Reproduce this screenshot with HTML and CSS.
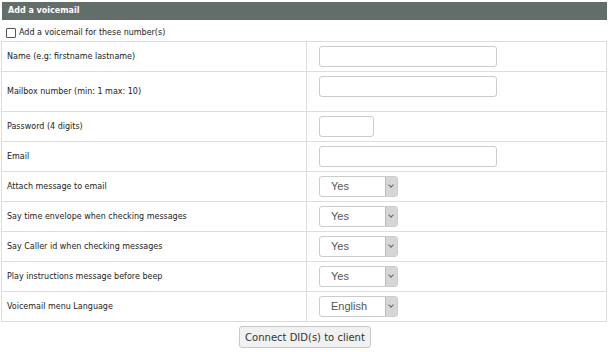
FILE: index.html
```html
<!DOCTYPE html>
<html>
<head>
    <title>Add a voicemail</title>
    <link rel="stylesheet" href="styles.css">
</head>
<body>
    <div class="panel">
        <div class="panel-title">Add a voicemail</div>
        <label class="check-row"><input type="checkbox" class="check"> Add a voicemail for these number(s)</label>
        <table class="vm-table">
            <tr>
                <td class="label">Name (e.g: firstname lastname)</td>
                <td class="field"><input type="text" class="text-input wide"></td>
            </tr>
            <tr class="tall">
                <td class="label">Mailbox number (min: 1 max: 10)</td>
                <td class="field top"><input type="text" class="text-input wide"></td>
            </tr>
            <tr>
                <td class="label">Password (4 digits)</td>
                <td class="field"><input type="text" class="text-input short"></td>
            </tr>
            <tr>
                <td class="label">Email</td>
                <td class="field"><input type="text" class="text-input wide"></td>
            </tr>
            <tr>
                <td class="label">Attach message to email</td>
                <td class="field"><div class="select"><span>Yes</span><i class="arrow"></i></div></td>
            </tr>
            <tr>
                <td class="label">Say time envelope when checking messages</td>
                <td class="field"><div class="select"><span>Yes</span><i class="arrow"></i></div></td>
            </tr>
            <tr>
                <td class="label">Say Caller id when checking messages</td>
                <td class="field"><div class="select"><span>Yes</span><i class="arrow"></i></div></td>
            </tr>
            <tr>
                <td class="label">Play instructions message before beep</td>
                <td class="field"><div class="select"><span>Yes</span><i class="arrow"></i></div></td>
            </tr>
            <tr>
                <td class="label">Voicemail menu Language</td>
                <td class="field"><div class="select"><span>English</span><i class="arrow"></i></div></td>
            </tr>
        </table>
        <div class="button-container">
            <button class="connect-button">Connect DID(s) to client</button>
        </div>
    </div>
</body>
</html>
```

FILE: styles.css
```css
body {
    margin: 0;
    padding: 2px 3px 0 1px;
    background-color: white;
    font-family: "DejaVu Sans", Verdana, sans-serif;
    color: #333;
}
.panel-title {
    margin-left: 1px;
    height: 18px;
    line-height: 18px;
    padding-left: 6px;
    background-color: #636e6b;
    color: white;
    font-size: 8px;
    font-weight: bold;
}
.check-row {
    display: flex;
    align-items: center;
    box-sizing: border-box;
    height: 21px;
    padding: 4px 0 0 5px;
    font-size: 8px;
    color: #222;
}
.check {
    width: 10px;
    height: 10px;
    margin: 0 3px 0 0;
    appearance: none;
    border: 1px solid #555;
    border-radius: 1px;
    background-color: white;
}
.vm-table {
    width: 100%;
    border-collapse: collapse;
    border: 1px solid #ddd;
}
.vm-table td {
    height: 29px;
    padding: 0;
    border-bottom: 1px solid #ddd;
}
.vm-table tr.tall td {
    height: 39px;
}
.label {
    width: 299px;
    padding-left: 5px !important;
    font-size: 8px;
    color: #222;
    border-right: 1px solid #ddd;
}
.field {
    padding-left: 12px !important;
}
.vm-table tr.tall td.top {
    vertical-align: top;
    height: 35px;
    padding-top: 4px;
}
.text-input {
    display: block;
    height: 21px;
    box-sizing: border-box;
    border: 1px solid #ccc;
    border-radius: 3px;
    padding: 0 4px;
    background-color: white;
}
.wide {
    width: 178px;
}
.short {
    width: 55px;
}
.select {
    display: flex;
    width: 79px;
    height: 21px;
    box-sizing: border-box;
    border: 1px solid #ccc;
    border-radius: 3px;
    overflow: hidden;
    font-family: "Liberation Sans", Arial, sans-serif;
    font-size: 11px;
    color: #555;
}
.select span {
    flex: 1;
    line-height: 19px;
    padding-left: 11px;
}
.arrow {
    width: 11px;
    background-color: #d6d6d6;
    border-left: 1px solid #bbb;
    position: relative;
}
.arrow::after {
    content: "";
    position: absolute;
    left: 3px;
    top: 6px;
    width: 3px;
    height: 3px;
    border-right: 1px solid #666;
    border-bottom: 1px solid #666;
    transform: rotate(45deg);
}
.button-container {
    display: flex;
    justify-content: center;
    padding-top: 4px;
    padding-left: 2px;
}
.connect-button {
    height: 22px;
    padding: 0 5px;
    background-color: #f1f1f1;
    color: #333;
    border: 1px solid #c8c8c8;
    border-radius: 3px;
    font-family: "DejaVu Sans", Verdana, sans-serif;
    font-size: 10px;
}
```
